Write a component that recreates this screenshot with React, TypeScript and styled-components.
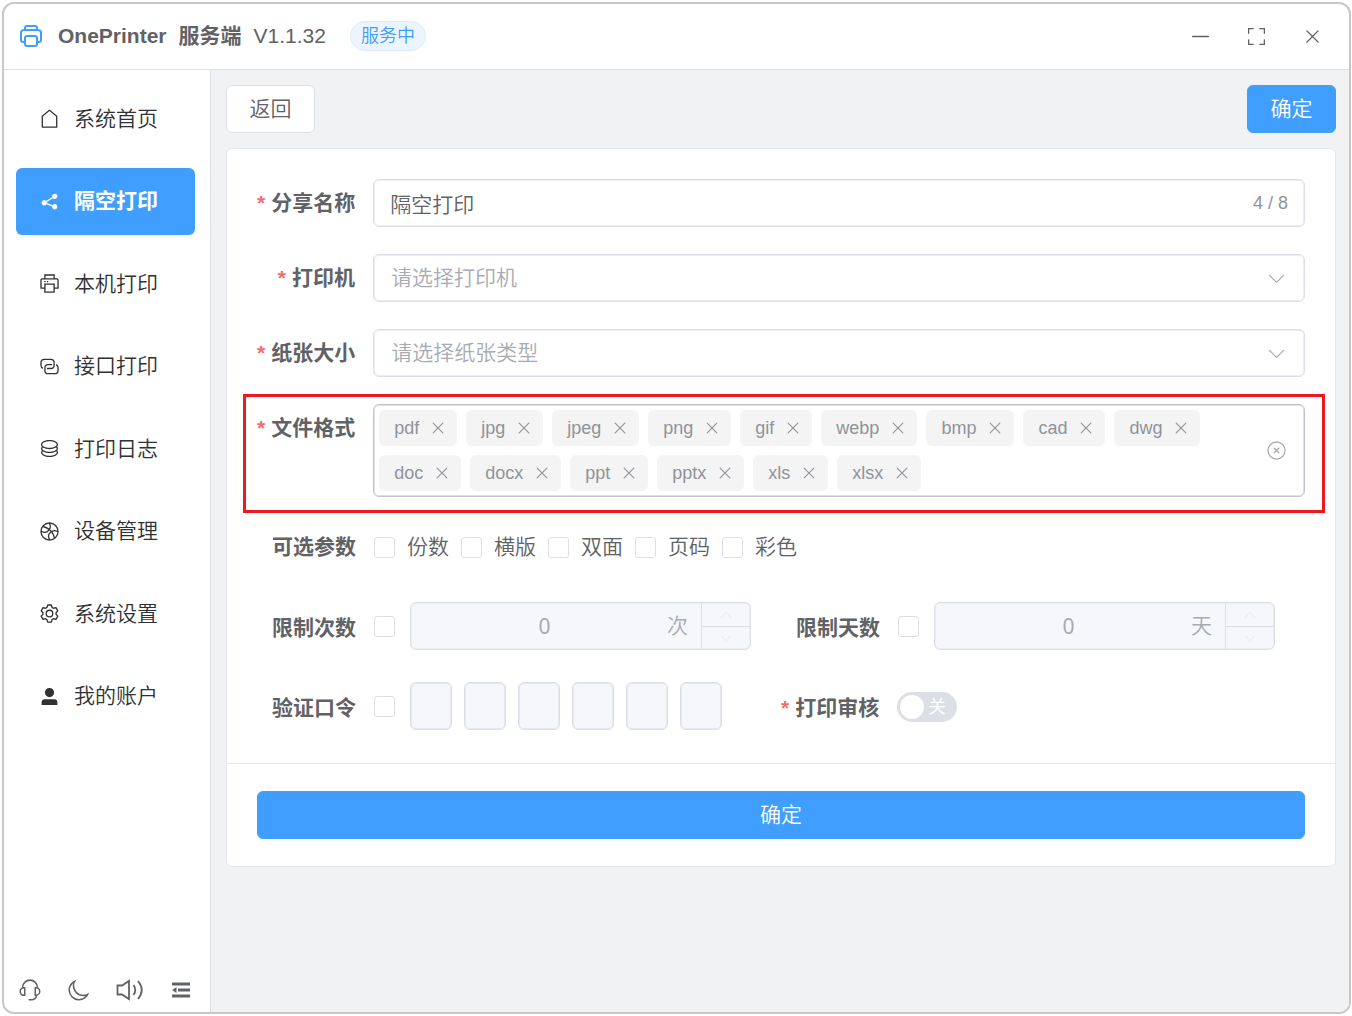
import React, { useState } from "react";
import styled, { createGlobalStyle, css } from "styled-components";

const blue = "#409eff";
const line = "#dcdfe6";
const text = "#606266";

const GlobalStyle = createGlobalStyle`
  *, *::before, *::after { box-sizing: border-box; }
  body {
    margin: 0;
    background: #fff;
    color: ${text};
    font-family: "Liberation Sans", "Noto Sans CJK SC", sans-serif;
    font-size: 21px;
    font-weight: 350;
    line-height: 30px;
  }
  button, input, select { font: inherit; color: inherit; margin: 0; padding: 0; }
  button { cursor: pointer; border: 0; background: none; }
`;

const iconPaths = {
  house: "M192 413.952V896h640V413.952L512 147.328zM139.52 374.4l352-293.312a32 32 0 0 1 40.96 0l352 293.312A32 32 0 0 1 896 398.976V928a32 32 0 0 1-32 32H160a32 32 0 0 1-32-32V398.976a32 32 0 0 1 11.52-24.576",
  share: "m679.872 348.8-301.76 188.608a127.808 127.808 0 0 1 5.12 52.16l279.936 104.96a128 128 0 1 1-22.464 59.904l-279.872-104.96a128 128 0 1 1-16.64-166.272l301.696-188.608a128 128 0 1 1 33.92 54.272z",
  printer: "M256 768H105.024c-14.272 0-19.456-1.472-24.64-4.288a29.056 29.056 0 0 1-12.16-12.096C65.536 746.432 64 741.248 64 727.04V379.072c0-42.816 4.48-58.304 12.8-73.984 8.384-15.616 20.672-27.904 36.288-36.288 15.68-8.32 31.168-12.8 73.984-12.8H256V64h512v192h68.928c42.816 0 58.304 4.48 73.984 12.8 15.616 8.384 27.904 20.672 36.288 36.288 8.32 15.68 12.8 31.168 12.8 73.984v347.904c0 14.272-1.472 19.456-4.288 24.64a29.056 29.056 0 0 1-12.096 12.16c-5.184 2.752-10.368 4.224-24.64 4.224H768v192H256zm64-192v320h384V576zm-64 128V512h512v192h128V379.072c0-29.376-1.408-36.48-5.248-43.776a23.296 23.296 0 0 0-10.048-10.048c-7.232-3.84-14.4-5.248-43.776-5.248H187.072c-29.376 0-36.48 1.408-43.776 5.248a23.296 23.296 0 0 0-10.048 10.048c-3.84 7.232-5.248 14.4-5.248 43.776V704zm64-448h384V128H320zm-64 128h64v64h-64zm128 0h64v64h-64z",
  link: "M640 384v64H448a128 128 0 0 0-128 128v128a128 128 0 0 0 128 128h320a128 128 0 0 0 128-128V576a128 128 0 0 0-64-110.848V394.88c74.56 26.368 128 97.472 128 181.056v128a192 192 0 0 1-192 192H448a192 192 0 0 1-192-192V576a192 192 0 0 1 192-192zM384 640v-64h192a128 128 0 0 0 128-128V320a128 128 0 0 0-128-128H256a128 128 0 0 0-128 128v128a128 128 0 0 0 64 110.848v70.272A192.064 192.064 0 0 1 64 448V320a192 192 0 0 1 192-192h320a192 192 0 0 1 192 192v128a192 192 0 0 1-192 192z",
  coin: "m161.92 580.736 29.888 58.88C171.328 659.776 160 681.728 160 704c0 82.304 155.328 160 352 160s352-77.696 352-160c0-22.272-11.392-44.16-31.808-64.32l30.464-58.432C903.936 615.808 928 657.664 928 704c0 129.728-188.544 224-416 224S96 833.728 96 704c0-46.592 24.32-88.576 65.92-123.264zm0-192 29.888 58.88C171.328 467.84 160 489.792 160 512c0 82.304 155.328 160 352 160s352-77.696 352-160c0-22.272-11.392-44.16-31.808-64.32l30.464-58.432C903.936 423.808 928 465.664 928 512c0 129.728-188.544 224-416 224S96 641.728 96 512c0-46.592 24.32-88.576 65.92-123.264zM512 544c-227.456 0-416-94.272-416-224S284.544 96 512 96s416 94.272 416 224-188.544 224-416 224m0-64c196.672 0 352-77.696 352-160S708.672 160 512 160s-352 77.696-352 160 155.328 160 352 160",
  ball: "M778.752 788.224a382.464 382.464 0 0 0 116.032-245.632 256.512 256.512 0 0 0-241.728-13.952 762.88 762.88 0 0 1 125.696 259.584m-55.04 44.224a699.648 699.648 0 0 0-125.056-269.632 256.128 256.128 0 0 0-56.064 331.968 382.72 382.72 0 0 0 181.12-62.336m-254.08 61.248A320.128 320.128 0 0 1 557.76 513.6a715.84 715.84 0 0 0-48.192-48.128 320.128 320.128 0 0 1-379.264 88.384 382.4 382.4 0 0 0 110.144 229.696 382.4 382.4 0 0 0 229.184 110.08zM129.28 481.088a256.128 256.128 0 0 0 331.072-56.448 699.648 699.648 0 0 0-268.8-124.352 382.656 382.656 0 0 0-62.272 180.8m106.56-235.84a762.88 762.88 0 0 1 258.688 125.056 256.512 256.512 0 0 0-13.44-241.088A382.464 382.464 0 0 0 235.84 245.248m318.08-114.944c40.576 89.536 37.76 193.92-8.448 281.344a779.84 779.84 0 0 1 66.176 66.112 320.832 320.832 0 0 1 282.112-8.128 382.4 382.4 0 0 0-110.144-229.12 382.4 382.4 0 0 0-229.632-110.208zM828.8 828.8a448 448 0 1 1-633.6-633.6 448 448 0 0 1 633.6 633.6",
  setting: "M600.704 64a32 32 0 0 1 30.464 22.208l35.2 109.376c14.784 7.232 28.928 15.36 42.432 24.512l112.384-24.192a32 32 0 0 1 34.432 15.36L944.32 364.8a32 32 0 0 1-4.032 37.504l-77.12 85.12a357.12 357.12 0 0 1 0 49.024l77.12 85.248a32 32 0 0 1 4.032 37.504l-88.704 153.6a32 32 0 0 1-34.432 15.296L708.8 803.904c-13.44 9.088-27.648 17.28-42.368 24.512l-35.264 109.376A32 32 0 0 1 600.704 960H423.296a32 32 0 0 1-30.464-22.208L357.696 828.48a351.616 351.616 0 0 1-42.56-24.64l-112.32 24.256a32 32 0 0 1-34.432-15.36L79.68 659.2a32 32 0 0 1 4.032-37.504l77.12-85.248a357.12 357.12 0 0 1 0-48.896l-77.12-85.248A32 32 0 0 1 79.68 364.8l88.704-153.6a32 32 0 0 1 34.432-15.296l112.32 24.256c13.568-9.152 27.776-17.408 42.56-24.64l35.2-109.312A32 32 0 0 1 423.232 64H600.64zm-23.424 64H446.72l-36.352 113.088-24.512 11.968a294.113 294.113 0 0 0-34.816 20.096l-22.656 15.36-116.224-25.088-65.28 113.152 79.68 88.192-1.92 27.136a293.12 293.12 0 0 0 0 40.192l1.92 27.136-79.808 88.192 65.344 113.152 116.224-25.024 22.656 15.296a294.113 294.113 0 0 0 34.816 20.096l24.512 11.968L446.72 896h130.688l36.48-113.152 24.448-11.904a288.282 288.282 0 0 0 34.752-20.096l22.592-15.296 116.288 25.024 65.28-113.152-79.744-88.192 1.92-27.136a293.12 293.12 0 0 0 0-40.256l-1.92-27.136 79.808-88.128-65.344-113.152-116.288 24.96-22.592-15.232a287.616 287.616 0 0 0-34.752-20.096l-24.448-11.904L577.344 128zM512 320a192 192 0 1 1 0 384 192 192 0 0 1 0-384m0 64a128 128 0 1 0 0 256 128 128 0 0 0 0-256",
  user: "M288 320a224 224 0 1 0 448 0 224 224 0 1 0-448 0m544 608H160a32 32 0 0 1-32-32v-96a160 160 0 0 1 160-160h448a160 160 0 0 1 160 160v96a32 32 0 0 1-32 32z",
  minus: "M128 544h768a32 32 0 1 0 0-64H128a32 32 0 0 0 0 64",
  full: "m160 96.064 192 .192a32 32 0 0 1 0 64l-192-.192V352a32 32 0 0 1-64 0V96h64zm0 831.872V928H96V672a32 32 0 1 1 64 0v191.936l192-.192a32 32 0 1 1 0 64zM864 96.064V96h64v256a32 32 0 1 1-64 0V160.064l-192 .192a32 32 0 1 1 0-64zm0 831.872-192-.192a32 32 0 0 1 0-64l192 .192V672a32 32 0 1 1 64 0v256h-64z",
  close: "M764.288 214.592 512 466.88 259.712 214.592a31.936 31.936 0 0 0-45.12 45.12L466.752 512 214.528 764.224a31.936 31.936 0 1 0 45.12 45.184L512 557.184l252.288 252.288a31.936 31.936 0 0 0 45.12-45.12L557.12 512.064l252.288-252.352a31.936 31.936 0 1 0-45.12-45.184z",
  circleClose: "m466.752 512-90.496-90.496a32 32 0 0 1 45.248-45.248L512 466.752l90.496-90.496a32 32 0 0 1 45.248 45.248L557.248 512l90.496 90.496a32 32 0 1 1-45.248 45.248L512 557.248l-90.496 90.496a32 32 0 0 1-45.248-45.248zM512 896a384 384 0 1 0 0-768 384 384 0 0 0 0 768m0 64a448 448 0 1 1 0-896 448 448 0 0 1 0 896",
  down: "M831.872 340.864 512 652.672 192.128 340.864a30.592 30.592 0 0 0-42.752 0 29.12 29.12 0 0 0 0 41.6L489.664 714.24a32 32 0 0 0 44.672 0l340.288-331.712a29.12 29.12 0 0 0 0-41.728 30.592 30.592 0 0 0-42.752 0z",
  up: "M831.872 683.136 512 371.328 192.128 683.136a30.592 30.592 0 0 1-42.752 0 29.12 29.12 0 0 1 0-41.6L489.664 309.76a32 32 0 0 1 44.672 0l340.288 331.712a29.12 29.12 0 0 1 0 41.728 30.592 30.592 0 0 1-42.752 0z",
  moon: "M240.448 240.448a384 384 0 1 0 559.424 525.696 448 448 0 0 1-542.016-542.08 390.592 390.592 0 0 0-17.408 16.384zm181.056 362.048a384 384 0 0 0 525.632 16.384A448 448 0 1 1 405.056 76.8a384 384 0 0 0 16.448 525.696",
  service: "M864 409.6a192 192 0 0 1-37.888 349.44A256.064 256.064 0 0 1 576 960h-96a32 32 0 1 1 0-64h96a192.064 192.064 0 0 0 181.12-128H736a32 32 0 0 1-32-32V416a32 32 0 0 1 32-32h32c10.368 0 20.544.832 30.528 2.432a288 288 0 0 0-573.056 0A193.235 193.235 0 0 1 256 384h32a32 32 0 0 1 32 32v320a32 32 0 0 1-32 32h-32a192 192 0 0 1-96-358.4 352 352 0 0 1 704 0M256 448a128 128 0 1 0 0 256zm512 0v256a128 128 0 1 0 0-256z",
  fold: "M896 192H128v128h768zm0 256H384v128h512zm0 256H128v128h768zM320 384 128 512l192 128z",
};

type IconName = keyof typeof iconPaths;

function Icon({ name, size = 21 }: { name: IconName; size?: number }) {
  return (
    <svg viewBox="0 0 1024 1024" width={size} height={size} fill="currentColor" aria-hidden="true">
      <path d={iconPaths[name]} />
    </svg>
  );
}

const LogoIcon = () => (
  <svg width="24" height="24" viewBox="0 0 24 24" fill="none" stroke={blue} strokeWidth="2" strokeLinejoin="round" aria-hidden="true">
    <path d="M6 6V4a2 2 0 0 1 2-2h8a2 2 0 0 1 2 2v2M6 18H4a2 2 0 0 1-2-2V9a3 3 0 0 1 3-3h14a3 3 0 0 1 3 3v7a2 2 0 0 1-2 2h-2" />
    <rect x="6" y="12" width="12" height="10" rx="2" />
  </svg>
);

const SoundIcon = () => (
  <svg width="28" height="22" viewBox="0 0 28 22" fill="none" stroke="currentColor" strokeWidth="1.8" aria-hidden="true">
    <path d="M1.500 6.500H6L13 2v18l-7-4.500H1.500zM17.500 6q3.500 5 0 10M22 2q7.500 9 0 18" />
  </svg>
);

const Frame = styled.div`
  padding: 2px 1px 2px 2px;
`;

const Window = styled.div`
  display: flex;
  flex-direction: column;
  min-height: calc(100vh - 4px);
  border: 2px solid #c8c8c8;
  border-radius: 12px;
  overflow: hidden;
`;

const Header = styled.header`
  display: flex;
  align-items: center;
  justify-content: space-between;
  height: 66px;
  padding: 0 26px 0 15px;
  border-bottom: 1px solid ${line};
`;

const Brand = styled.div`
  display: flex;
  align-items: center;
  gap: 12px;
  padding-bottom: 2px;
  svg { margin-right: 3px; }
`;

const Title = styled.strong`
  font-weight: 700;
`;

const Version = styled.span`
  font-weight: 400;
`;

const Status = styled.span`
  margin-left: 12px;
  padding: 0 10px;
  border: 1px solid #d9ecff;
  border-radius: 15px;
  background: #ecf5ff;
  color: ${blue};
  font-size: 18px;
  line-height: 28px;
`;

const WindowButtons = styled.div`
  display: flex;
  gap: 35px;
`;

const IconButton = styled.button`
  display: flex;
  align-items: center;
  justify-content: center;
`;

const Body = styled.div`
  display: flex;
  flex: 1;
`;

const Sidebar = styled.aside`
  display: flex;
  flex-direction: column;
  justify-content: space-between;
  flex: 0 0 207px;
  padding: 15px 15px 10px 12px;
  border-right: 1px solid ${line};
`;

const Nav = styled.nav`
  display: flex;
  flex-direction: column;
  justify-content: space-between;
  min-height: 645px;
`;

const NavLink = styled.a<{ $active?: boolean }>`
  display: flex;
  align-items: center;
  gap: 14px;
  height: 67px;
  padding-left: 23px;
  border-radius: 6px;
  color: #303133;
  text-decoration: none;
  ${({ $active }) => $active && css`
    background: ${blue};
    color: #fff;
    font-weight: 700;
  `}
`;

const Tools = styled.div`
  display: flex;
  align-items: center;
  justify-content: space-between;
  padding: 0 2px;
`;

const Main = styled.main`
  flex: 1;
  min-width: 0;
  padding: 15px 13px 15px 15px;
  background: #f1f2f4;
`;

const Toolbar = styled.div`
  display: flex;
  justify-content: space-between;
  margin-bottom: 15px;
`;

const Button = styled.button<{ $primary?: boolean; $block?: boolean }>`
  width: ${({ $block }) => ($block ? "100%" : "auto")};
  min-width: 89px;
  height: 48px;
  padding: 0 22px;
  border: 1px solid ${({ $primary }) => ($primary ? blue : line)};
  border-radius: 6px;
  background: ${({ $primary }) => ($primary ? blue : "#fff")};
  color: ${({ $primary }) => ($primary ? "#fff" : text)};
`;

const Card = styled.form`
  border: 1px solid #e4e7ed;
  border-radius: 6px;
  background: #fff;
`;

const Fields = styled.div`
  display: flex;
  flex-direction: column;
  gap: 27px;
  padding: 30px 30px 33px;
`;

const Footer = styled.div`
  padding: 27px 30px;
  border-top: 1px solid #e4e7ed;
`;

const Row = styled.div`
  position: relative;
  display: flex;
  align-items: flex-start;
  min-width: 0;
`;

const Label = styled.label<{ $required?: boolean }>`
  flex: 0 0 116px;
  padding-right: 17px;
  text-align: right;
  font-weight: 700;
  line-height: 48px;
  white-space: nowrap;
  ${({ $required }) => $required && css`
    padding-right: 18px;
    &::before { content: "*"; margin-right: 6px; color: #f56c6c; }
  `}
`;

const Pair = styled.div`
  display: grid;
  grid-template-columns: 1fr 1fr;
  margin-top: 5px;
  ${Row} { padding-right: 30px; }
  ${Label} { margin: 2px 0 -2px; }
`;

const OptionRow = styled(Row)`
  margin: -1px 0;
`;

const Control = styled.div`
  display: flex;
  align-items: center;
  flex: 1;
  min-width: 0;
  height: 48px;
  border: 1px solid ${line};
  border-radius: 6px;
  background: #fff;
  box-shadow: inset 0 0 0 1px #eceef2;
`;

const TextInput = styled.input`
  flex: 1;
  min-width: 0;
  height: 100%;
  padding-left: 16px;
  border: 0;
  outline: 0;
  background: none;
`;

const Counter = styled.span`
  padding-right: 16px;
  color: #909399;
  font-size: 18px;
  font-weight: 400;
`;

const SelectControl = styled(Control)`
  position: relative;
  color: #a8abb2;
  svg { position: absolute; right: 17px; pointer-events: none; }
`;

const Select = styled.select`
  width: 100%;
  height: 100%;
  padding-left: 17px;
  border: 0;
  outline: 0;
  background: none;
  appearance: none;
`;

const TagControl = styled(Control)`
  height: auto;
  padding: 5px 17px 5px 5px;
  border-color: #c0c4cc;
  box-shadow: inset 0 0 0 1px #dfe1e6;
  color: #a8abb2;
`;

const Tags = styled.ul`
  display: flex;
  flex: 1;
  flex-wrap: wrap;
  gap: 9px;
  margin: 0;
  padding: 0 60px 0 0;
  list-style: none;
`;

const Tag = styled.li`
  display: flex;
  align-items: center;
  gap: 10px;
  height: 36px;
  padding: 0 10px 0 15px;
  border-radius: 6px;
  background: #f4f4f5;
  color: #909399;
  font-size: 18px;
  font-weight: 400;
`;

const Highlight = styled.div`
  position: absolute;
  inset: -10px -20px -16px -14px;
  border: 3px solid #f01820;
  pointer-events: none;
`;

const Checks = styled.div`
  display: flex;
  gap: 12px;
  height: 48px;
  padding-left: 1px;
`;

const CheckLabel = styled.label`
  display: flex;
  align-items: center;
  gap: 12px;
`;

const Checkbox = styled.input.attrs({ type: "checkbox" })`
  appearance: none;
  flex: 0 0 21px;
  height: 21px;
  border: 1px solid ${line};
  border-radius: 3px;
  background: #fff;
  &:checked { background: ${blue}; border-color: ${blue}; }
`;

const Inline = styled.div`
  display: flex;
  align-items: center;
  flex: 1;
  gap: 15px;
  min-width: 0;
  padding-left: 1px;
`;

const NumberControl = styled(Control)`
  background: #f5f7fa;
  box-shadow: inset 0 0 0 1px #eceef3;
  color: #a8abb2;
`;

const NumberInput = styled(TextInput)`
  text-align: center;
  font-family: "Noto Sans", sans-serif;
  font-weight: 400;
`;

const Unit = styled.span`
  padding: 0 13px 0 5px;
`;

const Stepper = styled.div`
  display: grid;
  grid-template-rows: 1fr 1fr;
  flex: 0 0 49px;
  height: 100%;
  border-left: 1px solid ${line};
  color: #e4e7ed;
  button + button { border-top: 1px solid ${line}; }
`;

const Codes = styled.div`
  display: flex;
  gap: 12px;
`;

const CodeInput = styled.input`
  width: 42px;
  height: 48px;
  border: 1px solid ${line};
  border-radius: 6px;
  background: #f5f7fa;
  box-shadow: inset 0 0 0 1px #e6e9ef;
  text-align: center;
`;

const Switch = styled.label`
  display: flex;
  align-items: center;
  gap: 4px;
  width: 60px;
  height: 30px;
  margin-top: 10px;
  padding: 3px;
  border-radius: 15px;
  background: ${line};
  color: #fff;
  font-size: 18px;
  input {
    appearance: none;
    width: 24px;
    height: 24px;
    border-radius: 12px;
    background: #fff;
  }
`;

const nav: { icon: IconName; label: string }[] = [
  { icon: "house", label: "系统首页" },
  { icon: "share", label: "隔空打印" },
  { icon: "printer", label: "本机打印" },
  { icon: "link", label: "接口打印" },
  { icon: "coin", label: "打印日志" },
  { icon: "ball", label: "设备管理" },
  { icon: "setting", label: "系统设置" },
  { icon: "user", label: "我的账户" },
];

const initialFormats = [
  "pdf", "jpg", "jpeg", "png", "gif", "webp", "bmp", "cad", "dwg",
  "doc", "docx", "ppt", "pptx", "xls", "xlsx",
];

function LimitField({ id, label, unit }: { id: string; label: string; unit: string }) {
  return (
    <Row>
      <Label htmlFor={id}>{label}</Label>
      <Inline>
        <Checkbox aria-label={label} />
        <NumberControl>
          <NumberInput id={id} defaultValue="0" disabled />
          <Unit>{unit}</Unit>
          <Stepper>
            <IconButton type="button" aria-label="增加" disabled><Icon name="up" size={14} /></IconButton>
            <IconButton type="button" aria-label="减少" disabled><Icon name="down" size={14} /></IconButton>
          </Stepper>
        </NumberControl>
      </Inline>
    </Row>
  );
}

function SelectField({ id, label, placeholder }: { id: string; label: string; placeholder: string }) {
  return (
    <Row>
      <Label htmlFor={id} $required>{label}</Label>
      <SelectControl>
        <Select id={id}><option>{placeholder}</option></Select>
        <Icon name="down" />
      </SelectControl>
    </Row>
  );
}

export default function App() {
  const [name, setName] = useState("隔空打印");
  const [formats, setFormats] = useState(initialFormats);

  return (
    <Frame>
      <GlobalStyle />
      <Window>
        <Header>
          <Brand>
            <LogoIcon />
            <Title>OnePrinter</Title>
            <Title>服务端</Title>
            <Version>V1.1.32</Version>
            <Status>服务中</Status>
          </Brand>
          <WindowButtons>
            <IconButton aria-label="最小化"><Icon name="minus" /></IconButton>
            <IconButton aria-label="最大化"><Icon name="full" /></IconButton>
            <IconButton aria-label="关闭"><Icon name="close" /></IconButton>
          </WindowButtons>
        </Header>
        <Body>
          <Sidebar>
            <Nav>
              {nav.map(({ icon, label }) => (
                <NavLink key={icon} href="#" $active={icon === "share"}>
                  <Icon name={icon} />
                  {label}
                </NavLink>
              ))}
            </Nav>
            <Tools>
              <IconButton aria-label="客服"><Icon name="service" size={24} /></IconButton>
              <IconButton aria-label="深色模式"><Icon name="moon" size={24} /></IconButton>
              <IconButton aria-label="声音"><SoundIcon /></IconButton>
              <IconButton aria-label="收起菜单"><Icon name="fold" size={24} /></IconButton>
            </Tools>
          </Sidebar>
          <Main>
            <Toolbar>
              <Button>返回</Button>
              <Button $primary>确定</Button>
            </Toolbar>
            <Card onSubmit={(e) => e.preventDefault()}>
              <Fields>
                <Row>
                  <Label htmlFor="name" $required>分享名称</Label>
                  <Control>
                    <TextInput id="name" maxLength={8} value={name} onChange={(e) => setName(e.target.value)} />
                    <Counter>{name.length} / 8</Counter>
                  </Control>
                </Row>
                <SelectField id="printer" label="打印机" placeholder="请选择打印机" />
                <SelectField id="paper" label="纸张大小" placeholder="请选择纸张类型" />
                <Row>
                  <Label as="span" $required>文件格式</Label>
                  <TagControl>
                    <Tags>
                      {formats.map((format) => (
                        <Tag key={format}>
                          {format}
                          <IconButton
                            type="button"
                            aria-label={`移除 ${format}`}
                            onClick={() => setFormats(formats.filter((f) => f !== format))}
                          >
                            <Icon name="close" size={18} />
                          </IconButton>
                        </Tag>
                      ))}
                    </Tags>
                    <IconButton type="button" aria-label="清空" onClick={() => setFormats([])}>
                      <Icon name="circleClose" />
                    </IconButton>
                  </TagControl>
                  <Highlight />
                </Row>
                <OptionRow>
                  <Label as="span">可选参数</Label>
                  <Checks>
                    {["份数", "横版", "双面", "页码", "彩色"].map((option) => (
                      <CheckLabel key={option}>
                        <Checkbox />
                        {option}
                      </CheckLabel>
                    ))}
                  </Checks>
                </OptionRow>
                <Pair>
                  <LimitField id="times" label="限制次数" unit="次" />
                  <LimitField id="days" label="限制天数" unit="天" />
                </Pair>
                <Pair>
                  <Row>
                    <Label htmlFor="code">验证口令</Label>
                    <Inline>
                      <Checkbox id="code" />
                      <Codes>
                        {[1, 2, 3, 4, 5, 6].map((n) => (
                          <CodeInput key={n} aria-label={`口令第 ${n} 位`} maxLength={1} disabled />
                        ))}
                      </Codes>
                    </Inline>
                  </Row>
                  <Row>
                    <Label htmlFor="review" $required>打印审核</Label>
                    <Switch>
                      <input id="review" type="checkbox" role="switch" />
                      关
                    </Switch>
                  </Row>
                </Pair>
              </Fields>
              <Footer>
                <Button type="submit" $primary $block>确定</Button>
              </Footer>
            </Card>
          </Main>
        </Body>
      </Window>
    </Frame>
  );
}
